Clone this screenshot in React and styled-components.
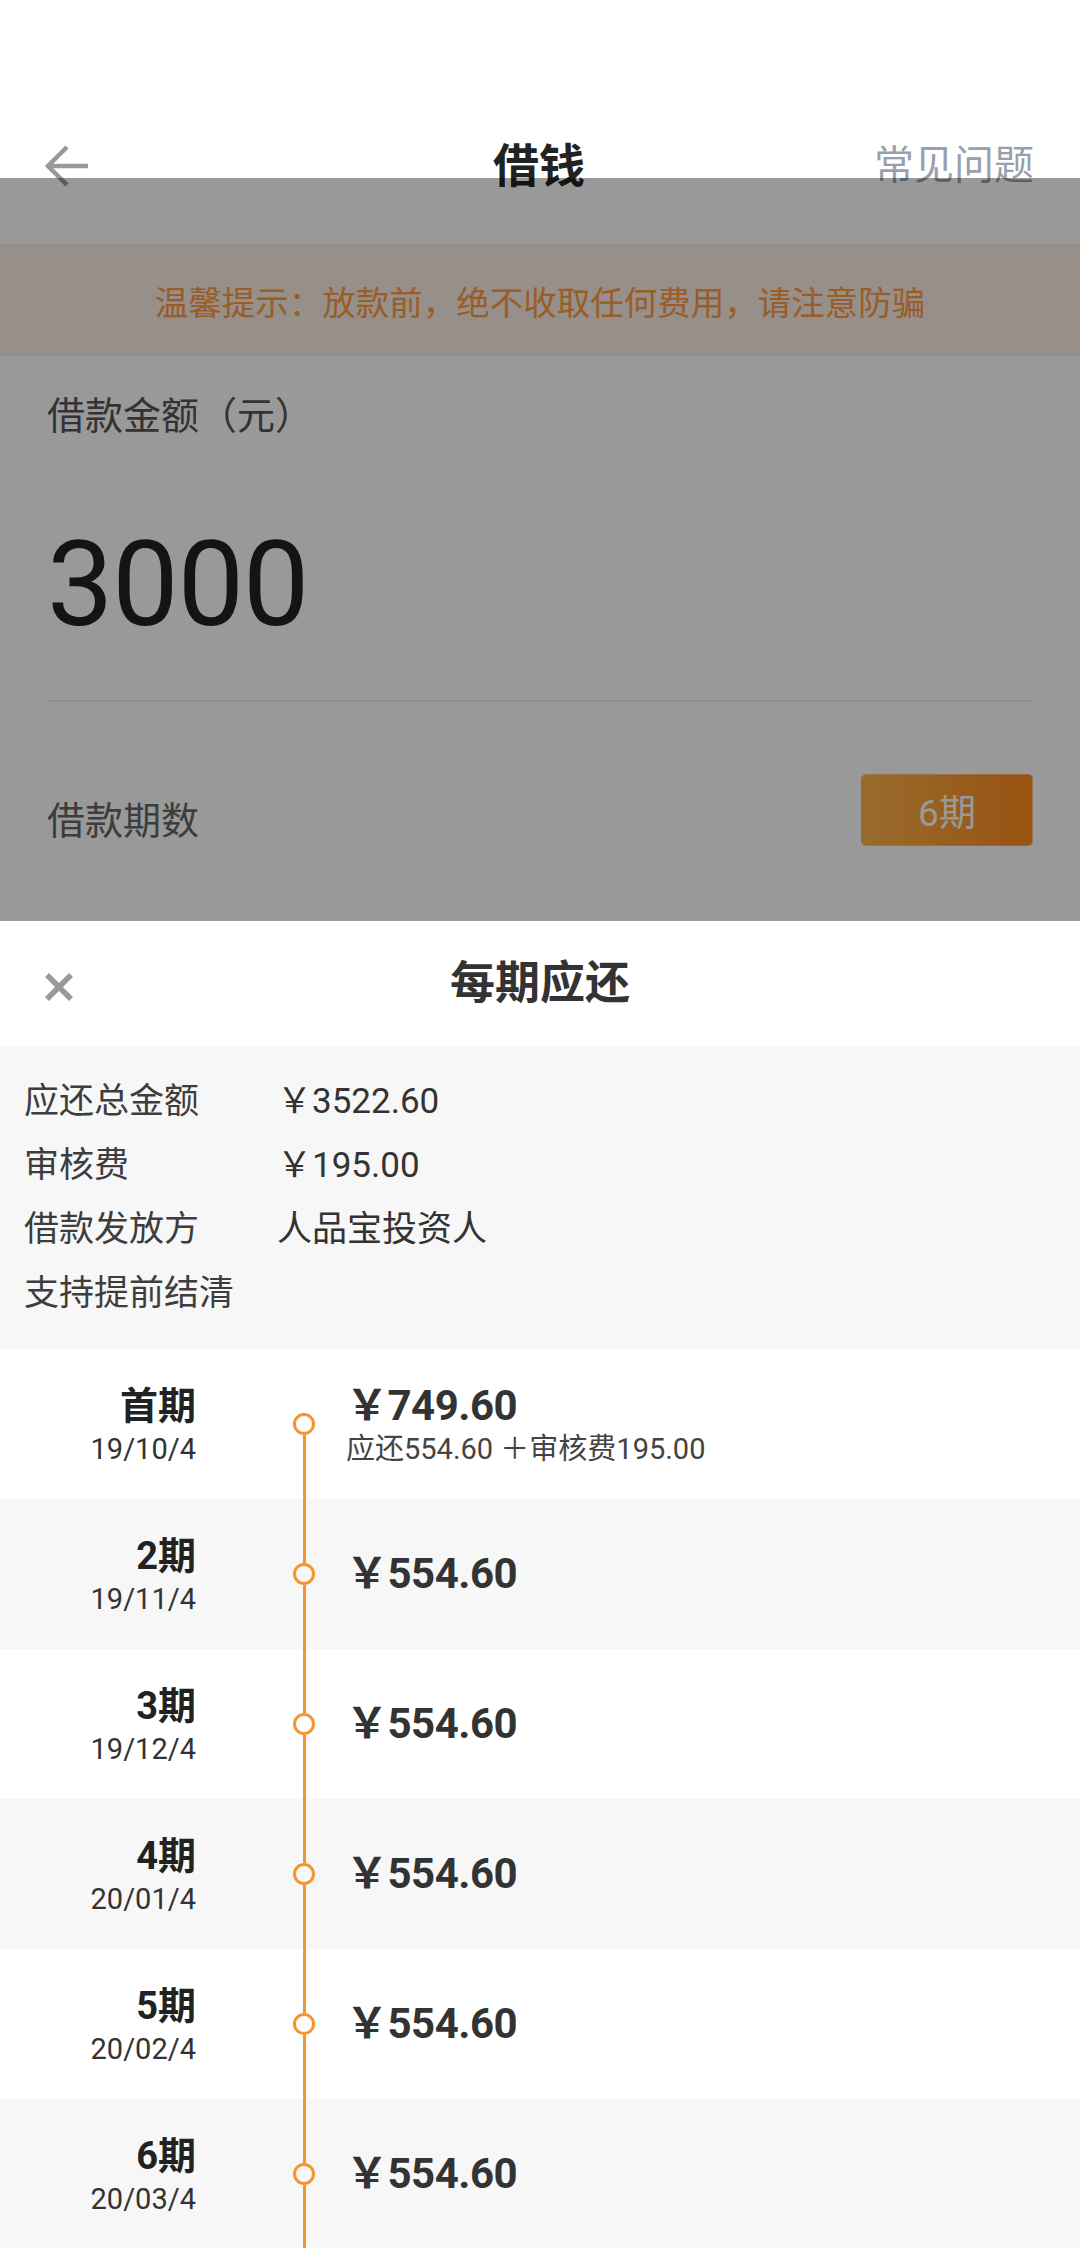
import styled, { createGlobalStyle } from "styled-components";

const GlobalStyle = createGlobalStyle`
  html, body {
    margin: 0;
    padding: 0;
    background: #fff;
  }
  body {
    width: 1080px;
    overflow: hidden;
    font-family: Roboto, "Noto Sans CJK SC", sans-serif;
  }
  * {
    box-sizing: border-box;
  }
`;

const Screen = styled.div`
  position: relative;
  width: 1080px;
  height: 2248px;
  overflow: hidden;
  background: #fff;
`;

/* page underneath the sheet */
const Header = styled.header`
  height: 244px;
  padding: 130px 46px 0 44px;
  background: #fff;
`;

const NavRow = styled.div`
  height: 72px;
  display: grid;
  grid-template-columns: 1fr auto 1fr;
  align-items: center;
`;

const BackButton = styled.div`
  display: flex;
  align-items: center;
  justify-self: start;
`;

const Title = styled.h1`
  margin: 0;
  font-size: 46px;
  line-height: 60px;
  font-weight: 700;
  color: #222;
`;

const NavLink = styled.span`
  justify-self: end;
  font-size: 40px;
  line-height: 60px;
  color: #9a9fac;
`;

const Notice = styled.div`
  height: 112px;
  display: flex;
  align-items: center;
  justify-content: center;
  background: #faeee6;
  color: #ff9c40;
  font-size: 33.5px;
`;

const Form = styled.section`
  height: 565px;
  padding: 35px 47px 0;
  background: #fff;
`;

const FieldLabel = styled.div`
  font-size: 38px;
  line-height: 50px;
  color: ${(p) => p.$color || "#555"};
`;

const AmountValue = styled.div`
  margin-top: 84px;
  font-size: 118px;
  line-height: 120px;
  color: #222;
  letter-spacing: -1px;
`;

const Divider = styled.div`
  margin-top: 55px;
  height: 2px;
  background: #ececec;
`;

const PeriodRow = styled.div`
  margin-top: 72px;
  display: flex;
  align-items: flex-end;
  justify-content: space-between;
`;

const PeriodButton = styled.div`
  width: 172px;
  height: 72px;
  border-radius: 5px;
  border: 1px solid rgba(255, 255, 255, 0.25);
  background: linear-gradient(90deg, #fdb44a, #ff8a1f);
  color: #fff;
  font-size: 37px;
  display: flex;
  align-items: center;
  justify-content: center;
`;

const Mask = styled.div`
  position: absolute;
  left: 0;
  right: 0;
  top: 178px;
  height: 743px;
  background: rgba(0, 0, 0, 0.4);
`;

/* bottom sheet */
const Sheet = styled.section`
  background: #fff;
`;

const SheetHeader = styled.div`
  height: 125px;
  padding: 0 44px;
  display: grid;
  grid-template-columns: 1fr auto 1fr;
  align-items: center;
`;

const CloseButton = styled.div`
  justify-self: start;
  display: flex;
  margin-top: 7px;
`;

const SheetTitle = styled.h2`
  margin: 0;
  font-size: 45px;
  line-height: 60px;
  font-weight: 700;
  color: #333;
`;

const Summary = styled.div`
  background: #f7f7f7;
  padding: 19px 24px 28px;
`;

const SummaryRow = styled.div`
  display: flex;
  height: 64px;
  align-items: center;
  font-size: 35px;
  color: #3d3d3d;
`;

const SummaryLabel = styled.span`
  width: 253px;
  flex-shrink: 0;
`;

const SummaryValue = styled.span`
  color: #333;
`;

const ScheduleRow = styled.div`
  height: 150px;
  display: flex;
  background: ${(p) => (p.$shaded ? "#f7f7f7" : "#fff")};
`;

const PeriodCol = styled.div`
  width: 196px;
  flex-shrink: 0;
  display: flex;
  flex-direction: column;
  justify-content: center;
  align-items: flex-end;
`;

const PeriodName = styled.div`
  font-size: 38px;
  line-height: 50px;
  font-weight: 700;
  color: #222;
`;

const PeriodDate = styled.div`
  font-size: 29px;
  line-height: 36px;
  color: #333;
`;

const Track = styled.div`
  width: 22px;
  margin: 0 31px 0 97px;
  flex-shrink: 0;
  display: flex;
  flex-direction: column;
  align-items: center;
`;

const Segment = styled.div`
  flex: 1;
  width: 3px;
  background: ${(p) => (p.$hidden ? "transparent" : "#f6952f")};
`;

const Dot = styled.div`
  width: 22px;
  height: 22px;
  border-radius: 50%;
  border: 3px solid #f6952f;
  background: ${(p) => (p.$shaded ? "#f7f7f7" : "#fff")};
`;

const PayCol = styled.div`
  flex: 1;
  display: flex;
  flex-direction: column;
  justify-content: center;
`;

const PayAmount = styled.div`
  font-size: 42px;
  line-height: 50px;
  font-weight: 700;
  color: #333;
  letter-spacing: -0.5px;
`;

const PayDetail = styled.div`
  font-size: 29px;
  line-height: 36px;
  color: #444;
`;

const schedule = [
  { name: "首期", date: "19/10/4", amount: "￥749.60", detail: "应还554.60 ＋审核费195.00" },
  { name: "2期", date: "19/11/4", amount: "￥554.60" },
  { name: "3期", date: "19/12/4", amount: "￥554.60" },
  { name: "4期", date: "20/01/4", amount: "￥554.60" },
  { name: "5期", date: "20/02/4", amount: "￥554.60" },
  { name: "6期", date: "20/03/4", amount: "￥554.60" },
];

const summary = [
  { label: "应还总金额", value: "￥3522.60" },
  { label: "审核费", value: "￥195.00" },
  { label: "借款发放方", value: "人品宝投资人" },
  { label: "支持提前结清", value: "" },
];

function BackArrow() {
  return (
    <svg width="44" height="44" viewBox="0 0 44 44" fill="none">
      <path d="M44 22H4" stroke="#999" strokeWidth="4.5" />
      <path d="M23 3L4 22L23 41" stroke="#999" strokeWidth="4.5" />
    </svg>
  );
}

function CloseIcon() {
  return (
    <svg width="30" height="28" viewBox="0 0 30 28" fill="none">
      <path d="M3 2L27 26M27 2L3 26" stroke="#999" strokeWidth="5.5" />
    </svg>
  );
}

export default function App() {
  return (
    <Screen>
      <GlobalStyle />
      <Header>
        <NavRow>
          <BackButton>
            <BackArrow />
          </BackButton>
          <Title>借钱</Title>
          <NavLink>常见问题</NavLink>
        </NavRow>
      </Header>
      <Notice>温馨提示：放款前，绝不收取任何费用，请注意防骗</Notice>
      <Form>
        <FieldLabel>借款金额（元）</FieldLabel>
        <AmountValue>3000</AmountValue>
        <Divider />
        <PeriodRow>
          <FieldLabel $color="#666">借款期数</FieldLabel>
          <PeriodButton>6期</PeriodButton>
        </PeriodRow>
      </Form>
      <Mask />

      <Sheet>
        <SheetHeader>
          <CloseButton>
            <CloseIcon />
          </CloseButton>
          <SheetTitle>每期应还</SheetTitle>
        </SheetHeader>
        <Summary>
          {summary.map((row) => (
            <SummaryRow key={row.label}>
              <SummaryLabel>{row.label}</SummaryLabel>
              <SummaryValue>{row.value}</SummaryValue>
            </SummaryRow>
          ))}
        </Summary>
        {schedule.map((item, i) => {
          const shaded = i % 2 === 1;
          return (
            <ScheduleRow key={item.name} $shaded={shaded}>
              <PeriodCol>
                <PeriodName>{item.name}</PeriodName>
                <PeriodDate>{item.date}</PeriodDate>
              </PeriodCol>
              <Track>
                <Segment $hidden={i === 0} />
                <Dot $shaded={shaded} />
                <Segment />
              </Track>
              <PayCol>
                <PayAmount>{item.amount}</PayAmount>
                {item.detail && <PayDetail>{item.detail}</PayDetail>}
              </PayCol>
            </ScheduleRow>
          );
        })}
      </Sheet>
    </Screen>
  );
}
